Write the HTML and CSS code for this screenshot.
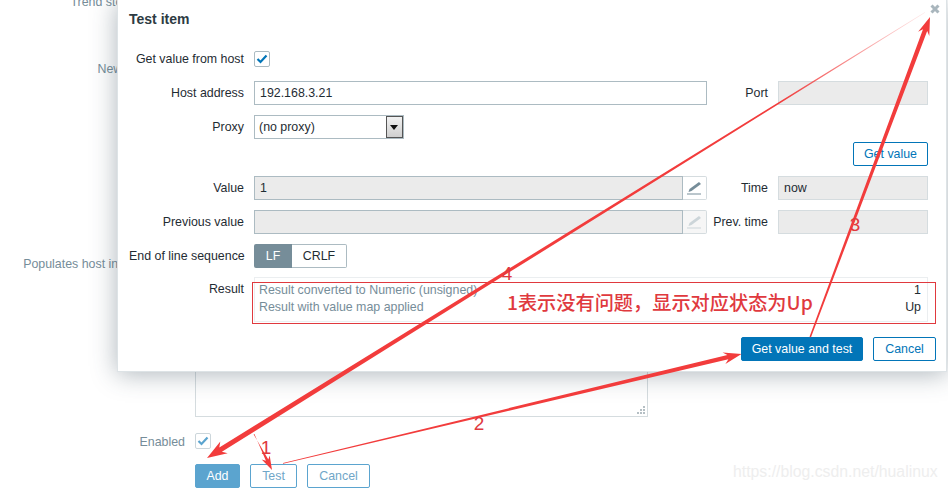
FILE: index.html
```html
<!DOCTYPE html>
<html lang="en">
<head>
    <meta charset="UTF-8">
    <meta name="viewport" content="width=device-width, initial-scale=1.0">
    <title>Test item</title>
    <link rel="stylesheet" href="styles.css">
</head>
<body>
    <div class="page-form">
        <div class="page-row">
            <label class="page-label">Trend storage period</label>
        </div>
        <div class="page-row row-new">
            <label class="page-label">New application</label>
        </div>
        <div class="page-row row-inventory">
            <label class="page-label">Populates host inventory field</label>
        </div>
        <div class="page-row row-description">
            <label class="page-label">Description</label>
            <div class="page-textarea">
                <svg class="grip" width="10" height="10" viewBox="0 0 10 10">
                    <path d="M7 1 h2 v2 h-2z M4 4 h2 v2 h-2z M7 4 h2 v2 h-2z M1 7 h2 v2 h-2z M4 7 h2 v2 h-2z M7 7 h2 v2 h-2z" fill="#b5bfc4"/>
                </svg>
            </div>
        </div>
        <div class="page-row row-enabled">
            <label class="page-label">Enabled</label>
            <span class="checkbox checkbox-faded">
                <svg width="12" height="10" viewBox="0 0 12 10"><path d="M1.5 5 L4.5 8 L10.5 1.5" fill="none" stroke="#5ba4cf" stroke-width="2.2"/></svg>
            </span>
        </div>
        <div class="page-actions">
            <button class="btn btn-add">Add</button>
            <button class="btn btn-faded btn-test">Test</button>
            <button class="btn btn-faded btn-cancel">Cancel</button>
        </div>
    </div>

    <div class="modal">
        <svg class="modal-close" width="12" height="12" viewBox="0 0 12 12"><path d="M2.5 2.5 L9.5 9.5 M9.5 2.5 L2.5 9.5" stroke="#a9b6bd" stroke-width="3"/></svg>
        <h4 class="modal-title">Test item</h4>

        <div class="form-row row-check">
            <label class="label">Get value from host</label>
            <span class="checkbox">
                <svg width="12" height="10" viewBox="0 0 12 10"><path d="M1.5 5 L4.5 8 L10.5 1.5" fill="none" stroke="#0275b8" stroke-width="2.2"/></svg>
            </span>
        </div>
        <div class="form-row">
            <label class="label">Host address</label>
            <div class="input">192.168.3.21</div>
            <label class="label">Port</label>
            <div class="input input-off"></div>
        </div>
        <div class="form-row row-tight">
            <label class="label">Proxy</label>
            <div class="select">
                <span class="select-text">(no proxy)</span>
                <span class="select-arrow"></span>
            </div>
        </div>
        <div class="form-row">
            <button class="btn btn-outline btn-get">Get value</button>
        </div>
        <div class="form-row">
            <label class="label">Value</label>
            <div class="input-group">
                <div class="input input-off">1</div>
                <span class="pencil">
                    <svg width="24" height="24" viewBox="0 0 24 24"><path d="M16 6 L18 8 L8.5 15 L5.5 16 L6.5 13 Z" fill="#768d99"/><path d="M4 18 H18" stroke="#768d99"/></svg>
                </span>
            </div>
            <label class="label">Time</label>
            <div class="input input-off">now</div>
        </div>
        <div class="form-row">
            <label class="label">Previous value</label>
            <div class="input-group">
                <div class="input input-off"></div>
                <span class="pencil pencil-off">
                    <svg width="24" height="24" viewBox="0 0 24 24"><path d="M16 6 L18 8 L8.5 15 L5.5 16 L6.5 13 Z" fill="#ccd5d9"/><path d="M4 18 H18" stroke="#ccd5d9"/></svg>
                </span>
            </div>
            <label class="label">Prev. time</label>
            <div class="input input-off"></div>
        </div>
        <div class="form-row row-eol">
            <label class="label">End of line sequence</label>
            <div class="switch">
                <span class="switch-item switch-on">LF</span>
                <span class="switch-item">CRLF</span>
            </div>
        </div>
        <div class="form-row row-result">
            <label class="label">Result</label>
            <div class="result">
                <span class="result-name">Result converted to Numeric (unsigned)</span>
                <span class="result-value">1</span>
                <span class="result-name">Result with value map applied</span>
                <span class="result-value">Up</span>
            </div>
        </div>
        <div class="modal-footer">
            <button class="btn btn-primary">Get value and test</button>
            <button class="btn btn-outline btn-cancel">Cancel</button>
        </div>
    </div>

    <div class="watermark">https://blog.csdn.net/hualinux</div>

    <!-- red notes drawn on top of the screenshot -->
    <svg class="notes" width="948" height="492" viewBox="0 0 948 492">
        <defs>
            <linearGradient id="fade" gradientUnits="userSpaceOnUse" x1="925" y1="12" x2="780" y2="102">
                <stop offset="0" stop-color="#f23c3c" stop-opacity="0.1"/>
                <stop offset="1" stop-color="#f23c3c"/>
            </linearGradient>
        </defs>
        <rect class="note-box" x="252.5" y="282.5" width="683" height="41"/>
        <polygon points="925,12 925,12.8 221.9,451.7 227.7,453.3 207,458 220.3,441.4 219.3,447.5" fill="url(#fade)"/>
        <polygon points="811,337.3 927.2,30.9 929.3,35.9 930,17 918.1,31.7 923,29.3 809.5,336.7" fill="#f23c3c"/>
        <polygon points="283,463.8 728.4,359.3 725.4,364 741.5,354 722.6,352.4 727.4,355.1 283,463" fill="#f23c3c"/>
        <polygon points="253.6,434.3 268.3,459.6 269.7,455.5 272,470 261.7,459.5 265.9,460.8 254.4,433.9" fill="#f23c3c"/>
        <text class="note-num" x="266" y="454">1</text>
        <text class="note-num" x="479" y="430">2</text>
        <text class="note-num" x="855" y="231">3</text>
        <text class="note-num" x="507" y="280">4</text>
        <text class="note-text" x="507" y="310">1表示没有问题，显示对应状态为Up</text>
    </svg>
</body>
</html>
```

FILE: styles.css
```css
* {
    box-sizing: border-box;
}

body {
    position: relative;
    margin: 0;
    height: 492px;
    overflow: hidden;
    background-color: #fff;
    font-family: "Liberation Sans", Arial, sans-serif;
    font-size: 12.4px;
    color: #1f2c33;
}

/* form behind the dialog */
.page-form {
    margin-top: -11px;
}

.page-row {
    display: grid;
    grid-template-columns: 195px 453px;
    align-items: center;
    min-height: 24px;
}

.page-label {
    padding-top: 2px;
    padding-right: 10px;
    text-align: right;
    white-space: nowrap;
    color: #768d99;
}

.row-new {
    margin-top: 43px;
}

.row-inventory {
    margin-top: 171px;
}

.row-description {
    margin-top: 25px;
    align-items: end;
}

.row-description .page-label {
    visibility: hidden;
}

.page-textarea {
    position: relative;
    height: 117px;
    border: 1px solid #d5dcdf;
    background-color: #fff;
}

.grip {
    position: absolute;
    right: 1px;
    bottom: 1px;
}

.row-enabled {
    margin-top: 12px;
}

.page-actions {
    display: flex;
    gap: 10px;
    margin-top: 11px;
    padding-left: 195px;
}

/* buttons */
.btn {
    height: 24px;
    padding: 0;
    border: 1px solid #0275b8;
    border-radius: 2px;
    background-color: #fff;
    font-family: inherit;
    font-size: 12.4px;
    color: #0275b8;
}

.btn-primary {
    width: 122px;
    background-color: #0275b8;
    color: #fff;
}

.btn-cancel {
    width: 63px;
}

.btn-test {
    width: 47px;
}

.btn-add {
    width: 45px;
    border-color: #5ba4cf;
    background-color: #5ba4cf;
    color: #fff;
}

.btn-faded {
    border-color: #5ba4cf;
    color: #6fa6c8;
}

.checkbox {
    display: flex;
    align-items: center;
    justify-content: center;
    width: 16px;
    height: 16px;
    border: 1px solid #acbbc2;
    border-radius: 2px;
    background-color: #fff;
}

.checkbox-faded {
    border-color: #ccd6db;
}

/* dialog */
.modal {
    position: absolute;
    top: 0;
    left: 117px;
    width: 830px;
    height: 372px;
    padding: 0 18px 10px 11px;
    border: 1px solid #dde3e6;
    border-top: 0;
    background-color: #fff;
    box-shadow: 0 2px 24px rgba(50, 70, 85, 0.4);
}

.modal-close {
    position: absolute;
    top: 3px;
    right: 5px;
}

.modal-title {
    height: 46px;
    margin: 0;
    padding-top: 10px;
    font-size: 14px;
    line-height: 18px;
    color: #2d3b43;
}

.form-row {
    display: grid;
    grid-template-columns: 125px 453px 71px 150px;
    align-items: center;
    margin-bottom: 10px;
}

.row-check {
    height: 25px;
}

.row-tight {
    margin-bottom: 3px;
}

.row-eol {
    margin-bottom: 9px;
}

.row-result {
    align-items: start;
    margin-bottom: 15px;
}

.label {
    padding-right: 10px;
    text-align: right;
    white-space: nowrap;
}

.row-result .label {
    padding-top: 4px;
    line-height: 17px;
}

.input {
    height: 24px;
    padding: 0 5px;
    border: 1px solid #acbbc2;
    background-color: #fff;
    line-height: 22px;
}

.input-off {
    border-color: #d5dcdf;
    background-color: #ebebeb;
}

.input-group {
    display: flex;
}

.input-group .input {
    flex: 1;
    border-color: #acbbc2;
}

.pencil {
    width: 24px;
    height: 24px;
    border: 1px solid #d5dcdf;
    border-left: 0;
    border-radius: 0 2px 2px 0;
    background-color: #fff;
}

.pencil svg {
    display: block;
    margin-top: -1px;
}

.pencil-off {
    background-color: #f6f6f6;
}

.select {
    display: flex;
    align-items: center;
    justify-content: space-between;
    width: 150px;
    height: 24px;
    padding-left: 4px;
    border: 1px solid #acbbc2;
}

.select-arrow {
    position: relative;
    width: 17px;
    height: 22px;
    border: 1px solid #555;
    background: linear-gradient(#f2f2f2, #cfcfcf);
}

.select-arrow::after {
    content: "";
    position: absolute;
    top: 8px;
    left: 3px;
    border-top: 5px solid #111;
    border-left: 4px solid transparent;
    border-right: 4px solid transparent;
}

.btn-get {
    grid-column: 4;
    justify-self: end;
    width: 75px;
}

.switch {
    display: flex;
}

.switch-item {
    width: 55px;
    height: 24px;
    border: 1px solid #acbbc2;
    border-left: 0;
    border-radius: 0 2px 2px 0;
    line-height: 22px;
    text-align: center;
}

.switch-on {
    width: 38px;
    border: 0;
    border-radius: 2px 0 0 2px;
    background-color: #768d99;
    line-height: 24px;
    color: #fff;
}

.result {
    grid-column: 2 / -1;
    display: grid;
    grid-template-columns: 1fr auto;
    align-content: start;
    height: 45px;
    padding: 4px 6px 0 4px;
    border: 1px solid #ebeef0;
    line-height: 17px;
}

.result-name {
    color: #768d99;
}

.result-value {
    text-align: right;
}

.modal-footer {
    display: flex;
    justify-content: flex-end;
    gap: 10px;
    margin-right: -8px;
}

.watermark {
    position: absolute;
    top: 463px;
    left: 733px;
    font-size: 15.8px;
    line-height: 18px;
    white-space: nowrap;
    color: #eeeeee;
}

/* annotations */
.notes {
    position: absolute;
    top: 0;
    left: 0;
}

.note-box {
    fill: none;
    stroke: #e0393e;
}

.note-num {
    font-size: 19px;
    text-anchor: middle;
    fill: #e0393e;
}

.note-text {
    font-family: "Noto Sans CJK SC", "Liberation Sans", sans-serif;
    font-size: 19.2px;
    font-weight: 500;
    fill: #e0393e;
}
```
